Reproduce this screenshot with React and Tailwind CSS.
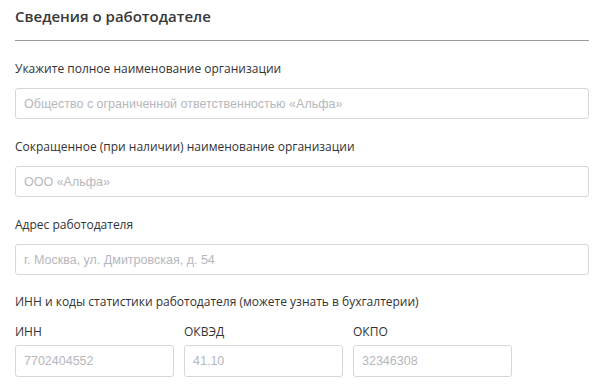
import React from 'react';

const labelCls = "block text-[12px] leading-4 text-[#333]";
const inputCls =
    "w-full h-[31px] px-[8px] border border-[#d5d7da] rounded-[3px] text-[12.5px] text-[#333] placeholder:text-[#b5b8bd] focus:outline-none";
const inputFont = { fontFamily: '"Liberation Sans", Arial, sans-serif' };

const Field = ({ label, placeholder, className }) => (
    <div className={className}>
        <label className={labelCls}>{label}</label>
        <input type="text" className={`${inputCls} mt-[11px]`} style={inputFont} placeholder={placeholder} />
    </div>
);

const App = () => {
    return (
        <div className="w-[599px] h-[384px] bg-white pl-[15px] pr-[10px] pt-[6px]" style={{ fontFamily: '"Open Sans", sans-serif' }}>
            <h2 className="text-[15px] leading-5 font-semibold text-[#383838]">Сведения о работодателе</h2>
            <div className="mt-[14px] h-px bg-[#9a9a9a]"></div>

            <Field className="mt-[20px]" label="Укажите полное наименование организации" placeholder="Общество с ограниченной ответственностью «Альфа»" />
            <Field className="mt-[20px]" label="Сокращенное (при наличии) наименование организации" placeholder="ООО «Альфа»" />
            <Field className="mt-[20px]" label="Адрес работодателя" placeholder="г. Москва, ул. Дмитровская, д. 54" />

            <p className={`${labelCls} mt-[19px]`}>ИНН и коды статистики работодателя (можете узнать в бухгалтерии)</p>

            <div className="mt-[14px] grid grid-cols-3 gap-[10px] w-[497px]">
                {[
                    ['ИНН', '7702404552'],
                    ['ОКВЭД', '41.10'],
                    ['ОКПО', '32346308'],
                ].map(([label, value]) => (
                    <div key={label}>
                        <label className="block text-[12px] leading-4 text-[#333]">{label}</label>
                        <input type="text" className={`${inputCls} mt-[5px] h-[32px]`} style={inputFont} placeholder={value} />
                    </div>
                ))}
            </div>
        </div>
    );
};

export default App;
